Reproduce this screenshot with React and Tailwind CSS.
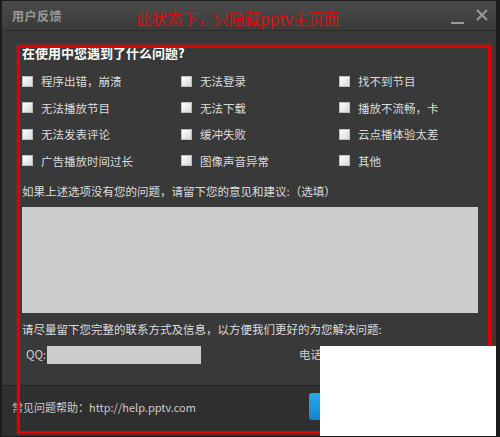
import React from 'react';

const options = [
  '程序出错，崩溃', '无法登录', '找不到节目',
  '无法播放节目', '无法下载', '播放不流畅，卡',
  '无法发表评论', '缓冲失败', '云点播体验太差',
  '广告播放时间过长', '图像声音异常', '其他',
];

const font = { fontFamily: '"Noto Sans CJK SC", "Liberation Sans", sans-serif' };

const CheckItem = ({ label }) => (
  <label className="flex items-center gap-[8px] text-[11.5px] leading-[14px] text-[#dcdcdc]">
    <span className="w-[11px] h-[11px] shrink-0 bg-gradient-to-br from-[#ffffff] to-[#d8d8d8] border border-[#bdbdbd]" />
    <span>{label}</span>
  </label>
);

const App = () => {
  return (
    <div
      className="relative w-[500px] h-[437px] overflow-hidden bg-[#393939] border-l-2 border-t border-b border-r-[4px] border-[#1c1c1c] flex flex-col"
      style={font}
    >
      {/* TITLE BAR */}
      <div className="h-[30px] shrink-0 flex items-center pl-[10px] pr-[8px] bg-gradient-to-b from-[#4a4a4a] to-[#3c3c3c] border-b border-[#2a2a2a]">
        <span className="text-[12px] font-bold text-[#9a9a9a] tracking-[0.5px]">用户反馈</span>
        <span className="ml-[74px] mt-[4px] text-[15.5px] leading-[20px] text-[#d81010]">此状态下，只隐藏pptv主页面</span>
        <div className="ml-auto flex items-center gap-[12px] text-[#9a9a9a]">
          <span className="w-[13px] h-[2px] bg-[#9a9a9a] mt-[14px]" />
          <svg width="12" height="12" viewBox="0 0 12 12" className="mb-[2px]">
            <path d="M1 1 L11 11 M11 1 L1 11" stroke="#9a9a9a" strokeWidth="2" />
          </svg>
        </div>
      </div>

      {/* BODY */}
      <div className="flex-1 pl-[20px] pr-[18px]">
        <h2 className="mt-[15px] text-[13px] leading-[14px] font-bold text-white">在使用中您遇到了什么问题?</h2>

        <div className="mt-[8px] grid grid-cols-[159px_158px_1fr] auto-rows-[26.5px] items-center">
          {options.map((o) => (
            <CheckItem key={o} label={o} />
          ))}
        </div>

        <p className="mt-[10px] text-[11.5px] leading-[14px] text-[#dcdcdc]">如果上述选项没有您的问题，请留下您的意见和建议:（选填）</p>

        <div className="mt-[9px] h-[106px] bg-[#cccccc]" />

        <p className="mt-[9px] text-[11.5px] leading-[14px] text-[#dcdcdc]">请尽量留下您完整的联系方式及信息，以方便我们更好的为您解决问题:</p>

        <div className="mt-[10px] flex items-center text-[11.5px] text-[#cfcfcf]">
          <span className="pl-[4px] w-[25px]">QQ:</span>
          <div className="w-[154px] h-[18px] bg-[#cccccc]" />
          <span className="ml-[98px] w-[27px]">电话</span>
          <div className="flex-1 h-[18px] bg-[#cccccc]" />
        </div>
      </div>

      {/* FOOTER */}
      <div className="h-[51px] shrink-0 bg-[#2f2f2f] border-t border-[#262626] grid grid-cols-[297px_1fr] px-[10px] pt-[7px]">
        <span className="mt-[7px] text-[11px] leading-[14px] text-[#cccccc]">常见问题帮助：http://help.pptv.com</span>
        <button className="w-[90px] h-[27px] rounded-[3px] bg-gradient-to-b from-[#2aa8ee] to-[#1583cc] text-white text-[12px]">提交</button>
      </div>

      {/* ANNOTATION */}
      <div className="absolute left-[15px] top-[44px] w-[474px] h-[389px] border-[3px] border-[#e30000] shadow-[0_0_3px_rgba(255,0,0,0.6)] pointer-events-none" />
      <div className="absolute left-[318px] top-[345px] right-0 bottom-0 bg-white" />
    </div>
  );
};

export default App;
